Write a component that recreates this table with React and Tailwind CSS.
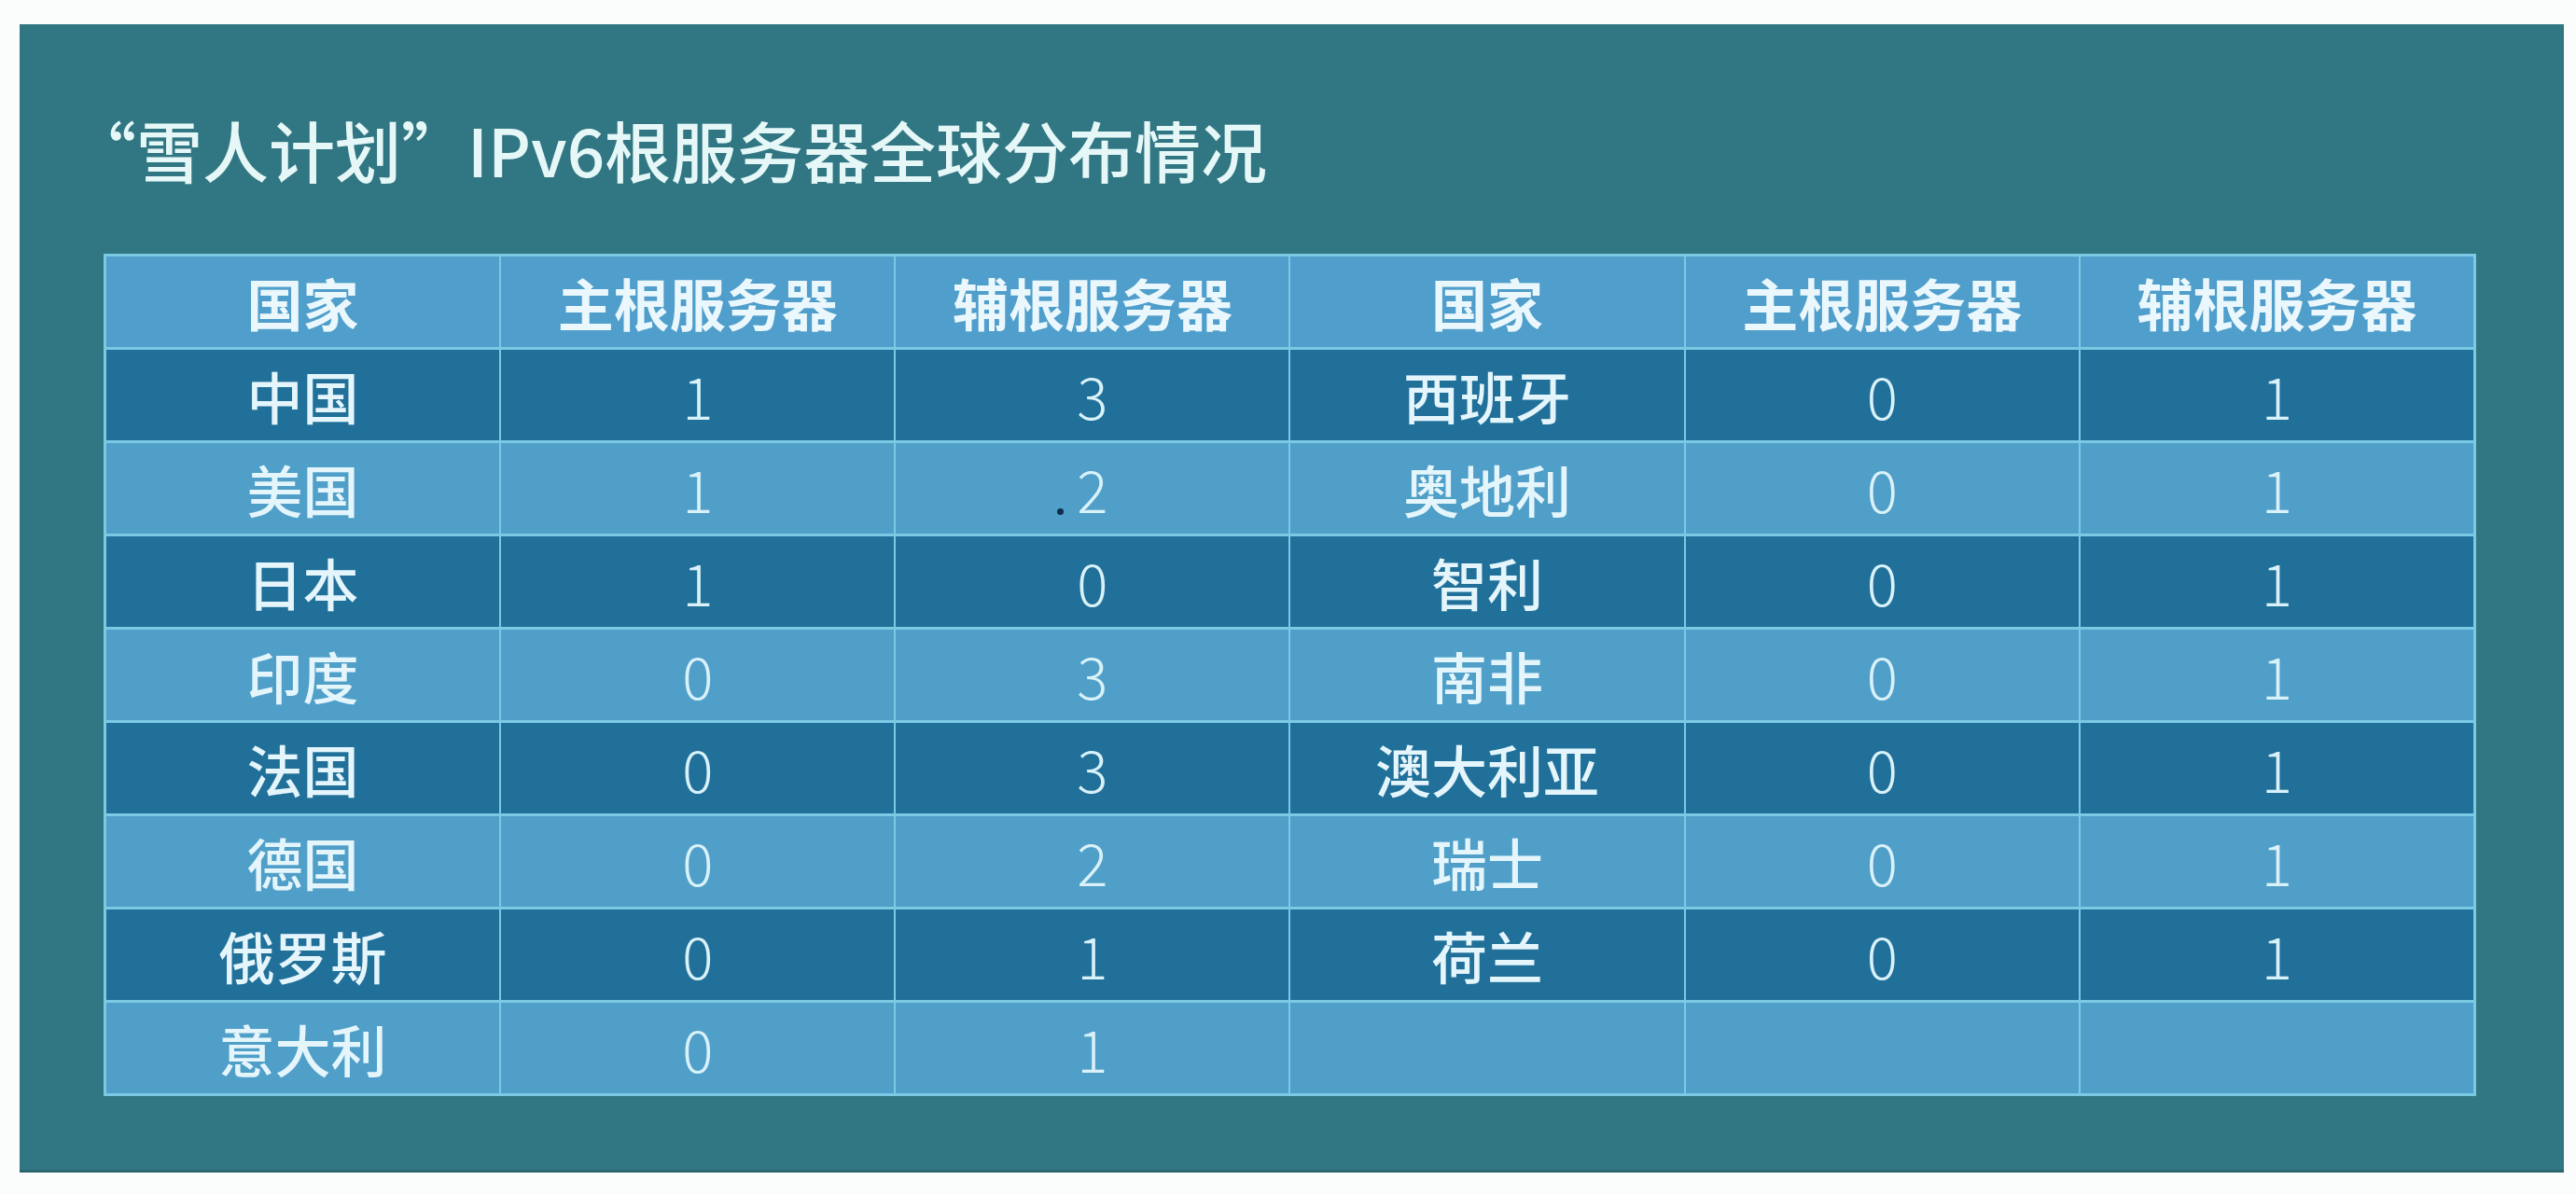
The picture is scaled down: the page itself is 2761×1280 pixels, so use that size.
import React from "react";

const font = { fontFamily: '"Noto Sans CJK SC", "Noto Sans", sans-serif' };

const header = ["国家", "主根服务器", "辅根服务器", "国家", "主根服务器", "辅根服务器"];

const rows = [
  ["中国", "1", "3", "西班牙", "0", "1"],
  ["美国", "1", "2", "奥地利", "0", "1"],
  ["日本", "1", "0", "智利", "0", "1"],
  ["印度", "0", "3", "南非", "0", "1"],
  ["法国", "0", "3", "澳大利亚", "0", "1"],
  ["德国", "0", "2", "瑞士", "0", "1"],
  ["俄罗斯", "0", "1", "荷兰", "0", "1"],
  ["意大利", "0", "1", "", "", ""],
];

function Cell({ children, dark, isNum, dot }) {
  return (
    <div
      className={
        "relative flex items-center justify-center h-[97px] " +
        (dark ? "bg-[#20709a] " : "bg-[#4f9fc9] ") +
        (isNum ? "text-[62px] font-light text-[#d9f1f9]" : "text-[60px] font-medium text-[#e4f5fb]")
      }
    >
      {children}
      {dot && <span className="absolute left-[173px] top-[70px] w-[7px] h-[7px] rounded-full bg-[#0d2e4a]" />}
    </div>
  );
}

export default function App() {
  return (
    <div className="w-[2761px] h-[1280px] bg-[#fbfdfd] pt-[26px] pl-[21px]" style={font}>
      <div className="w-[2727px] h-[1231px] bg-[#317783] border-b-[3px] border-[#2a6570] pt-[98px]">
        <h1 className="pl-[54px] text-[71px] leading-none font-medium text-[#e6f7f8] h-[80px]">
          “雪人计划”IPv6根服务器全球分布情况
        </h1>
        <div className="ml-[90px] mt-[68px] w-[2543px] bg-[#7cc9e4] p-[3px] grid grid-cols-6 gap-x-[2px] gap-y-[3px]">
          {header.map((h, i) => (
            <div
              key={"h" + i}
              className="flex items-center justify-center h-[97px] bg-[#4f9ecb] text-[60px] font-bold text-[#eaf7fc]"
            >
              {h}
            </div>
          ))}
          {rows.map((r, ri) =>
            r.map((c, ci) => (
              <Cell
                key={ri + "-" + ci}
                dark={ri % 2 === 0}
                isNum={ci === 1 || ci === 2 || ci === 4 || ci === 5}
                dot={ri === 1 && ci === 2}
              >
                {c}
              </Cell>
            ))
          )}
        </div>
      </div>
    </div>
  );
}
